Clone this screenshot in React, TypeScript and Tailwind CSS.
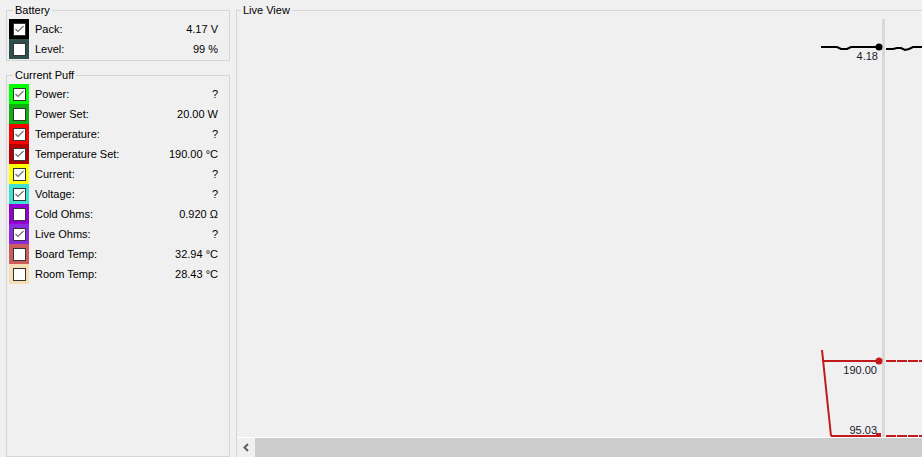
import type { ReactNode } from "react";

type Row = { label: string; value: string; color: string; checked: boolean };

const battery: Row[] = [
  { label: "Pack:", value: "4.17 V", color: "#000000", checked: true },
  { label: "Level:", value: "99 %", color: "#2f4f4f", checked: false },
];

const puff: Row[] = [
  { label: "Power:", value: "?", color: "#00ff00", checked: true },
  { label: "Power Set:", value: "20.00 W", color: "#10b010", checked: false },
  { label: "Temperature:", value: "?", color: "#ff0000", checked: true },
  { label: "Temperature Set:", value: "190.00 °C", color: "#b40000", checked: true },
  { label: "Current:", value: "?", color: "#ffff00", checked: true },
  { label: "Voltage:", value: "?", color: "#40e0d0", checked: true },
  { label: "Cold Ohms:", value: "0.920 Ω", color: "#9400d3", checked: false },
  { label: "Live Ohms:", value: "?", color: "#8a2be2", checked: true },
  { label: "Board Temp:", value: "32.94 °C", color: "#cd5c5c", checked: false },
  { label: "Room Temp:", value: "28.43 °C", color: "#f5deb3", checked: false },
];

function CheckBox({ checked }: { checked: boolean }) {
  return (
    <span className="flex h-[13px] w-[13px] items-center justify-center border border-[#333333] bg-white">
      {checked && (
        <svg width="11" height="11" viewBox="0 0 11 11" aria-hidden>
          <polyline points="1.5,5 4,7.5 9.5,2" fill="none" stroke="#6a6a6a" strokeWidth="1.1" />
        </svg>
      )}
    </span>
  );
}

function ValueRow({ row }: { row: Row }) {
  return (
    <div className="flex h-[20px] items-center">
      <div className="flex h-[20px] w-[20px] items-center justify-center" style={{ backgroundColor: row.color }}>
        <CheckBox checked={row.checked} />
      </div>
      <span className="ml-[6px] flex-1">{row.label}</span>
      <span className="mr-[9px]">{row.value}</span>
    </div>
  );
}

function Group({ title, className, children }: { title: string; className?: string; children: ReactNode }) {
  return (
    <fieldset className={`border border-[#d5d5d5] ${className ?? ""}`}>
      <legend className="ml-[4px] px-[2px] leading-[14px]">{title}</legend>
      {children}
    </fieldset>
  );
}

function LiveChart() {
  const red = "#c21a1a";
  return (
    <svg className="block h-[420px] w-full" aria-hidden>
      <g transform="translate(-237,-17)" fontFamily="'Liberation Sans', Arial, sans-serif" fontSize="11">
        <rect x="882" y="19" width="3" height="418" fill="#d8d8d8" />

        <polyline
          points="821,47 837,47 841,49 847,49 851,47 879,47"
          fill="none"
          stroke="#000"
          strokeWidth="2"
        />
        <circle cx="879" cy="47" r="3.5" fill="#000" />
        <polyline
          points="886,49 893,49 897,48 901,48 905,50 909,49 913,47 917,47 922,47"
          fill="none"
          stroke="#000"
          strokeWidth="2"
        />
        <text x="878" y="60" textAnchor="end" fill="#1a1a2a">4.18</text>

        <line x1="822" y1="350" x2="831" y2="436" stroke={red} strokeWidth="2" />
        <line x1="822" y1="361" x2="879" y2="361" stroke={red} strokeWidth="2" />
        <circle cx="879" cy="361" r="3.5" fill={red} />
        <line x1="886" y1="361" x2="922" y2="361" stroke={red} strokeWidth="2" strokeDasharray="10 1" />
        <text x="877" y="374" textAnchor="end" fill="#1a1a2a">190.00</text>

        <line x1="831" y1="436" x2="879" y2="436" stroke={red} strokeWidth="2" />
        <rect x="876" y="433" width="5" height="4" fill={red} />
        <line x1="886" y1="436" x2="922" y2="436" stroke={red} strokeWidth="2" strokeDasharray="10 1" />
        <text x="877" y="434" textAnchor="end" fill="#1a1a2a">95.03</text>
      </g>
    </svg>
  );
}

export default function App() {
  return (
    <div className="flex h-[457px] w-[922px] overflow-hidden bg-[#f0f0f0] font-['Liberation_Sans',Arial,sans-serif] text-[11px] text-black">
      <div className="ml-[6px] flex w-[224px] shrink-0 flex-col pt-[3px]">
        <Group title="Battery" className="px-[2px] pb-[1px] pt-[2px]">
          {battery.map((r) => (
            <ValueRow key={r.label} row={r} />
          ))}
        </Group>
        <Group title="Current Puff" className="mt-[7px] h-[420px] px-[2px] pt-[2px]">
          {puff.map((r) => (
            <ValueRow key={r.label} row={r} />
          ))}
        </Group>
      </div>

      <div className="ml-[6px] mr-[-12px] flex-1 pt-[3px]">
        <Group title="Live View" className="h-[480px]">
          <LiveChart />
          <div className="flex h-[20px] border-t border-white">
            <div className="flex w-[18px] items-center justify-center">
              <svg width="8" height="9" viewBox="0 0 8 9" aria-hidden>
                <polyline points="6,1 2.5,4.5 6,8" fill="none" stroke="#606060" strokeWidth="2" />
              </svg>
            </div>
            <div className="flex-1 bg-[#cdcdcd]" />
          </div>
        </Group>
      </div>
    </div>
  );
}
